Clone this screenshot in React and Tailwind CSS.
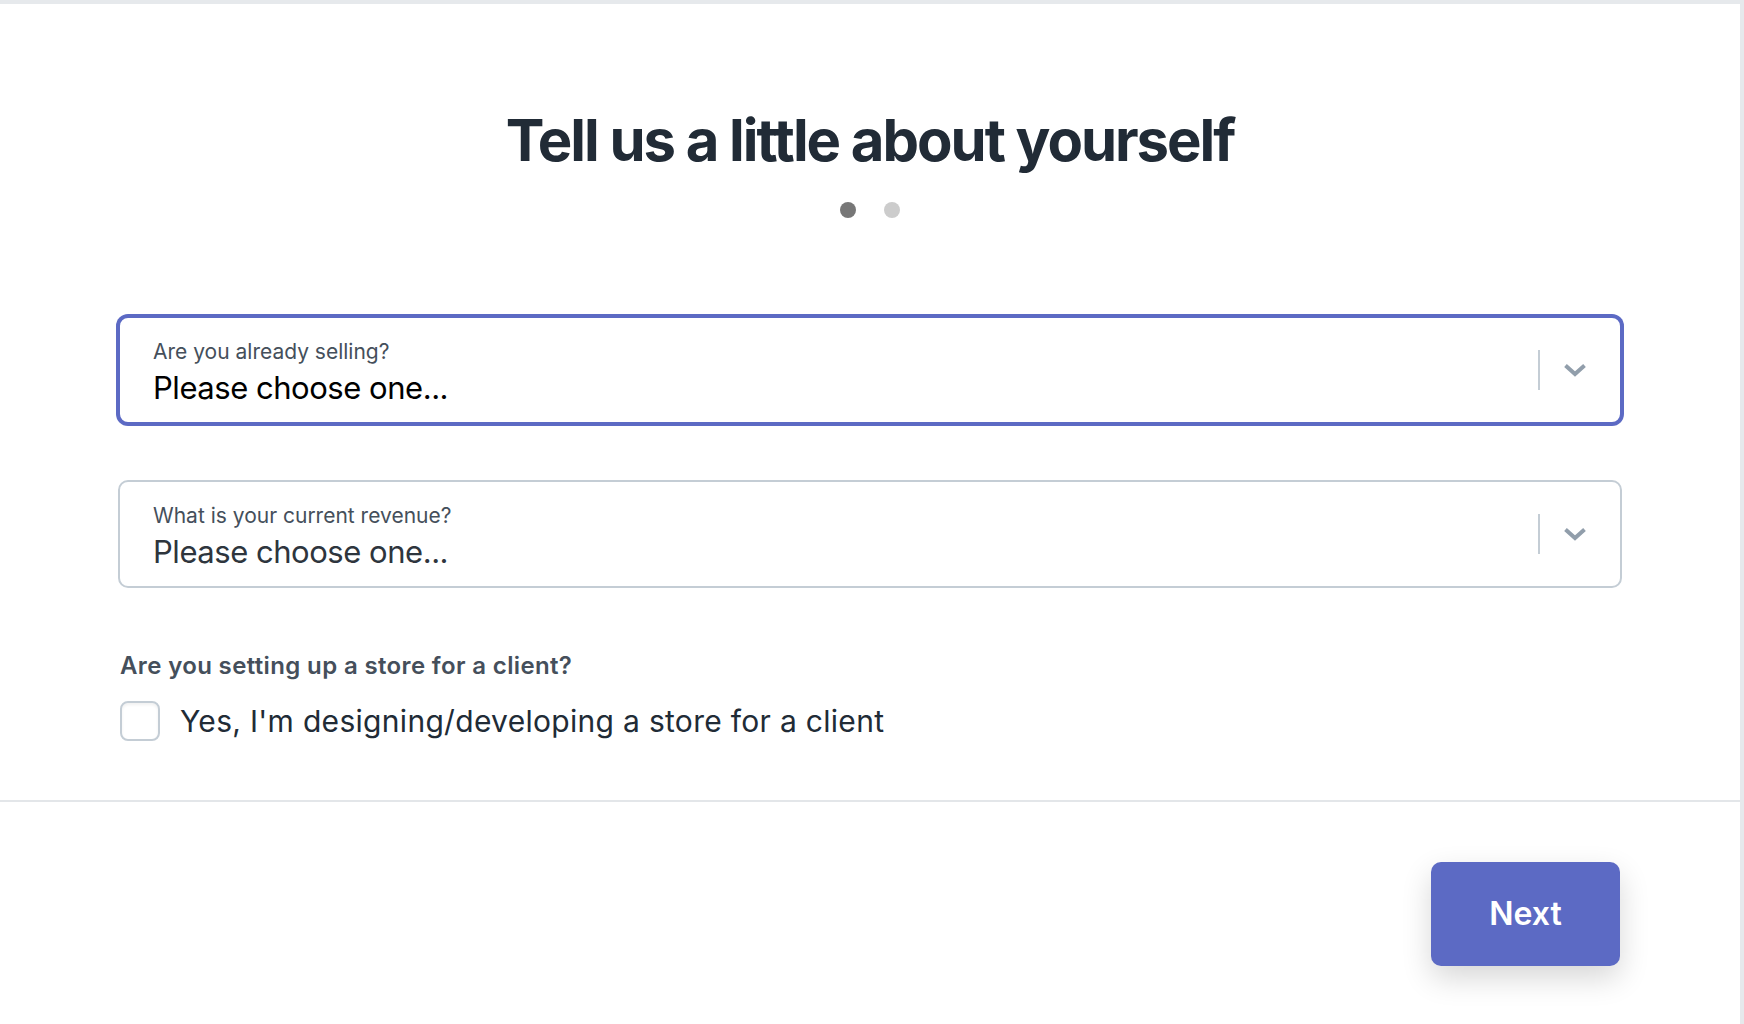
import { useState } from 'react'

function Chevron() {
  return (
    <svg width="24" height="14" viewBox="0 0 24 14" fill="none">
      <path d="M2.5 2.5 L12 11 L21.5 2.5" stroke="#919eab" strokeWidth="4" />
    </svg>
  )
}

function SelectBox({ label, focused, valueClass }) {
  return (
    <div
      className={
        'flex items-center h-[108px] rounded-[10px] border-2 bg-white pl-[33px] pr-[33px] ' +
        (focused ? 'border-[#5c6ac4] shadow-[0_0_0_2px_#5c6ac4]' : 'border-[#c4cdd5]')
      }
    >
      <div className="flex-1 flex flex-col pt-[7px]">
        <span className="text-[21px] leading-[24px] text-[#454f5b]">{label}</span>
        <span className={'text-[31px] leading-[40px] tracking-[-0.015em] mt-[4px] ' + valueClass}>
          Please choose one...
        </span>
      </div>
      <div className="w-[2px] h-[40px] bg-[#c4cdd5]" />
      <div className="ml-[23px] flex items-center">
        <Chevron />
      </div>
    </div>
  )
}

export default function App() {
  const [checked, setChecked] = useState(false)

  return (
    <div className="flex min-h-screen bg-white font-['Inter',sans-serif]">
      <div className="flex-1 flex flex-col border-t-4 border-[#e6e9ec]">
        <h1 className="pt-[100px] text-center text-[58px] leading-[72px] font-bold tracking-[-0.035em] text-[#212b36]">
          Tell us a little about yourself
        </h1>
        <div className="flex justify-center gap-[28px] mt-[26px]">
          <span className="w-4 h-4 rounded-full bg-[#777]" />
          <span className="w-4 h-4 rounded-full bg-[#ccc]" />
        </div>

        <div className="px-[118px] mt-[98px]">
          <SelectBox label="Are you already selling?" focused valueClass="text-black" />
          <div className="mt-[56px]">
            <SelectBox label="What is your current revenue?" valueClass="text-[#2e353d]" />
          </div>

          <div className="pl-[2px] mt-[64px]">
            <p className="text-[24px] leading-[28px] font-semibold tracking-[0.015em] text-[#454f5b]">
              Are you setting up a store for a client?
            </p>
            <label className="flex items-center mt-[21px] cursor-pointer">
              <span
                onClick={() => setChecked(!checked)}
                className="w-10 h-10 rounded-[8px] border-2 border-[#c4cdd5] bg-white shadow-[inset_0_2px_3px_rgba(0,0,0,0.06)] flex items-center justify-center"
              >
                {checked && <span className="w-4 h-4 rounded-sm bg-[#5c6ac4]" />}
              </span>
              <span className="ml-[20px] text-[30px] leading-[40px] tracking-[0.01em] text-[#212b36]">
                Yes, I'm designing/developing a store for a client
              </span>
            </label>
          </div>
        </div>

        <div className="mt-[59px] h-[2px] bg-[#e3e6e9]" />

        <div className="flex justify-end pr-[120px] mt-[60px] pb-[58px]">
          <button className="w-[189px] h-[104px] rounded-[10px] bg-[#5c6ac4] text-white text-[32px] font-semibold shadow-[0_12px_30px_rgba(0,0,0,0.16)]">
            Next
          </button>
        </div>
      </div>
      <div className="w-1 bg-[#e6e9ec]" />
    </div>
  )
}
